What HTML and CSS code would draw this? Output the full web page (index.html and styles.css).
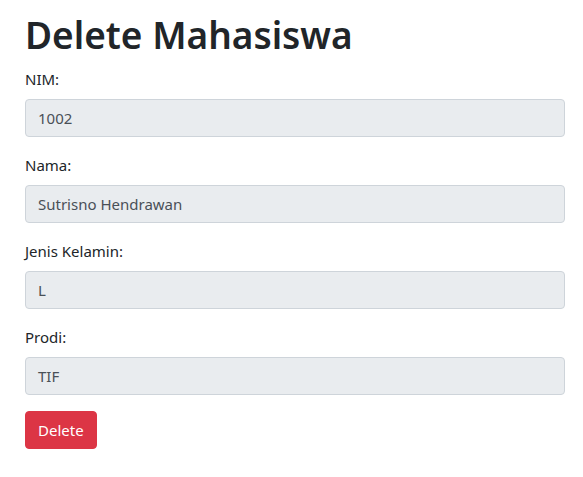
FILE: index.html
```html
<!DOCTYPE html>
<html>
<head>
<meta charset="utf-8">
<link rel="stylesheet" href="styles.css">
</head>
<body>
<div class="container">
  <h1 class="title">Delete Mahasiswa</h1>
  <form class="form">
    <div class="form-group">
      <label class="label">NIM:</label>
      <div class="field">1002</div>
    </div>
    <div class="form-group">
      <label class="label">Nama:</label>
      <div class="field">Sutrisno Hendrawan</div>
    </div>
    <div class="form-group">
      <label class="label">Jenis Kelamin:</label>
      <div class="field">L</div>
    </div>
    <div class="form-group">
      <label class="label">Prodi:</label>
      <div class="field">TIF</div>
    </div>
    <button type="button" class="btn-danger">Delete</button>
  </form>
</div>
</body>
</html>
```

FILE: styles.css
```css
html, body {
  margin: 0;
  padding: 0;
  background: #fff;
}
body {
  font-family: "Noto Sans", "Open Sans", sans-serif;
  font-size: 15px;
  line-height: 24px;
  color: #212529;
}
.container {
  width: 540px;
  padding: 11px 0 0 25px;
}
.title {
  margin: 0 0 8px 0;
  font-size: 37px;
  line-height: 48px;
  font-weight: 600;
  color: #212529;
}
.form {
  display: flex;
  flex-direction: column;
  align-items: flex-start;
}
.form-group {
  display: flex;
  flex-direction: column;
  width: 100%;
  margin-bottom: 16px;
}
.label {
  display: block;
  margin-bottom: 8px;
  line-height: 24px;
}
.field {
  box-sizing: border-box;
  height: 38px;
  padding: 6px 12px;
  background: #e9ecef;
  border: 1px solid #ced4da;
  border-radius: 4px;
  color: #495057;
  line-height: 24px;
}
.btn-danger {
  box-sizing: border-box;
  height: 38px;
  padding: 6px 12px;
  background: #dc3545;
  border: 1px solid #dc3545;
  border-radius: 4px;
  color: #fff;
  font-family: inherit;
  font-size: 15px;
  line-height: 24px;
  cursor: pointer;
}
```
